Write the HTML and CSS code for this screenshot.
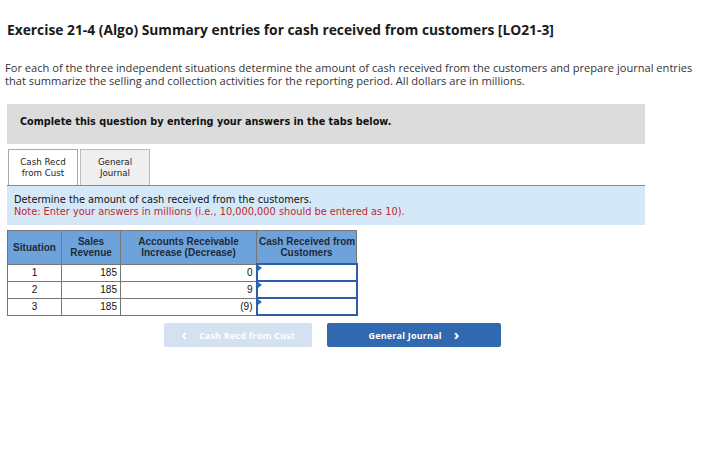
FILE: index.html
```html
<!DOCTYPE html>
<html>
<head>
<meta charset="utf-8">
<link rel="stylesheet" href="styles.css">
</head>
<body>
<h1 class="title">Exercise 21-4 (Algo) Summary entries for cash received from customers [LO21-3]</h1>
<p class="intro">For each of the three independent situations determine the amount of cash received from the customers and prepare journal entries that summarize the selling and collection activities for the reporting period. All dollars are in millions.</p>
<div class="instr">Complete this question by entering your answers in the tabs below.</div>
<div class="tabs">
  <div class="tab active">Cash Recd<br>from Cust</div>
  <div class="tab">General<br>Journal</div>
</div>
<div class="info">
  <div>Determine the amount of cash received from the customers.</div>
  <div class="note">Note: Enter your answers in millions (i.e., 10,000,000 should be entered as 10).</div>
</div>
<table class="grid">
  <colgroup>
    <col class="c1"><col class="c2"><col class="c3"><col class="c4">
  </colgroup>
  <thead>
    <tr>
      <th>Situation</th>
      <th>Sales<br>Revenue</th>
      <th>Accounts Receivable<br>Increase (Decrease)</th>
      <th>Cash Received from<br>Customers</th>
    </tr>
  </thead>
  <tbody>
    <tr><td class="ctr">1</td><td class="num">185</td><td class="num">0</td><td class="inp"><span class="flag"></span></td></tr>
    <tr><td class="ctr">2</td><td class="num">185</td><td class="num">9</td><td class="inp"><span class="flag"></span></td></tr>
    <tr><td class="ctr">3</td><td class="num">185</td><td class="num">(9)</td><td class="inp"><span class="flag"></span></td></tr>
  </tbody>
</table>
<div class="nav">
  <div class="btn prev"><span class="chev">&lsaquo;</span>Cash Recd from Cust</div>
  <div class="btn next">General Journal<span class="chev">&rsaquo;</span></div>
</div>
</body>
</html>
```

FILE: styles.css
```css
body {
  margin: 0;
  padding: 0 7px;
  font-family: "Open Sans", "Lato", sans-serif;
  color: #222;
  background: #fff;
}
.title {
  font-size: 13.8px;
  font-weight: 700;
  margin: 0;
  padding-top: 21px;
  line-height: 18px;
  color: #1a1a1a;
}
.intro {
  margin: 22px 0 0 -2px;
  font-size: 11.1px;
  line-height: 13px;
  color: #333;
}
.instr {
  margin-top: 17px;
  width: 638px;
  height: 40px;
  box-sizing: border-box;
  background: #dcdcdc;
  font-family: "DejaVu Sans", Verdana, sans-serif;
  font-weight: 700;
  font-size: 9.7px;
  padding: 12px 0 0 13px;
  color: #111;
}
.tabs {
  display: flex;
  gap: 2px;
  margin-top: 5px;
  margin-left: 1px;
}
.tab {
  width: 70px;
  height: 36px;
  box-sizing: border-box;
  border: 1px solid #bdbdbd;
  border-bottom: none;
  background: #efefef;
  font-family: "DejaVu Sans", Verdana, sans-serif;
  font-size: 8.7px;
  line-height: 11px;
  text-align: center;
  padding-top: 7px;
  color: #222;
}
.tab.active {
  background: #fff;
  border-color: #a9a9a9;
}
.info {
  width: 638px;
  box-sizing: border-box;
  background: #d5e8f7;
  border-top: 1px solid #8a8a8a;
  height: 40px;
  padding: 8px 0 0 7px;
  font-family: "DejaVu Sans", Verdana, sans-serif;
  font-size: 9.8px;
  line-height: 12px;
  color: #111;
}
.note {
  color: #c0272d;
}
.grid {
  margin-top: 5px;
  border-collapse: collapse;
  table-layout: fixed;
  width: 349px;
  font-family: "Liberation Sans", Arial, sans-serif;
  font-size: 10px;
  color: #111;
}
.c1 { width: 54px; }
.c2 { width: 59px; }
.c3 { width: 136px; }
.c4 { width: 100px; }
.grid th {
  background: #6ea2da;
  border: 1px solid #777;
  height: 32px;
  padding: 0 2px;
  font-weight: 700;
  line-height: 11px;
  color: #1d2a3a;
  white-space: nowrap;
}
.grid td {
  border: 1px solid #777;
  height: 15px;
  padding: 0 3px;
  line-height: 15px;
}
.grid .ctr { text-align: center; }
.grid .num { text-align: right; }
.grid td.inp {
  position: relative;
  border: 2px solid #2e5fa6;
  padding: 0;
}
.flag {
  position: absolute;
  left: 0;
  top: 0;
  width: 0;
  height: 0;
  border-top: 3px solid transparent;
  border-bottom: 3px solid transparent;
  border-left: 4px solid #2f6ebc;
}
.nav {
  display: flex;
  gap: 15px;
  margin: 7px 0 0 157px;
}
.btn {
  height: 24px;
  box-sizing: border-box;
  border-radius: 2px;
  font-family: "Open Sans", "Lato", sans-serif;
  font-weight: 700;
  font-size: 9px;
  letter-spacing: 0.2px;
  color: #fff;
  display: flex;
  align-items: center;
  justify-content: center;
}
.prev {
  width: 148px;
  background: #d4e1f0;
}
.next {
  width: 174px;
  background: #3069b0;
}
.chev {
  font-size: 15px;
  font-weight: 700;
  line-height: 1;
  margin: -2px 12px 0 12px;
}
.prev .chev { margin-left: 0; }
.next .chev { margin-right: 0; }
```
